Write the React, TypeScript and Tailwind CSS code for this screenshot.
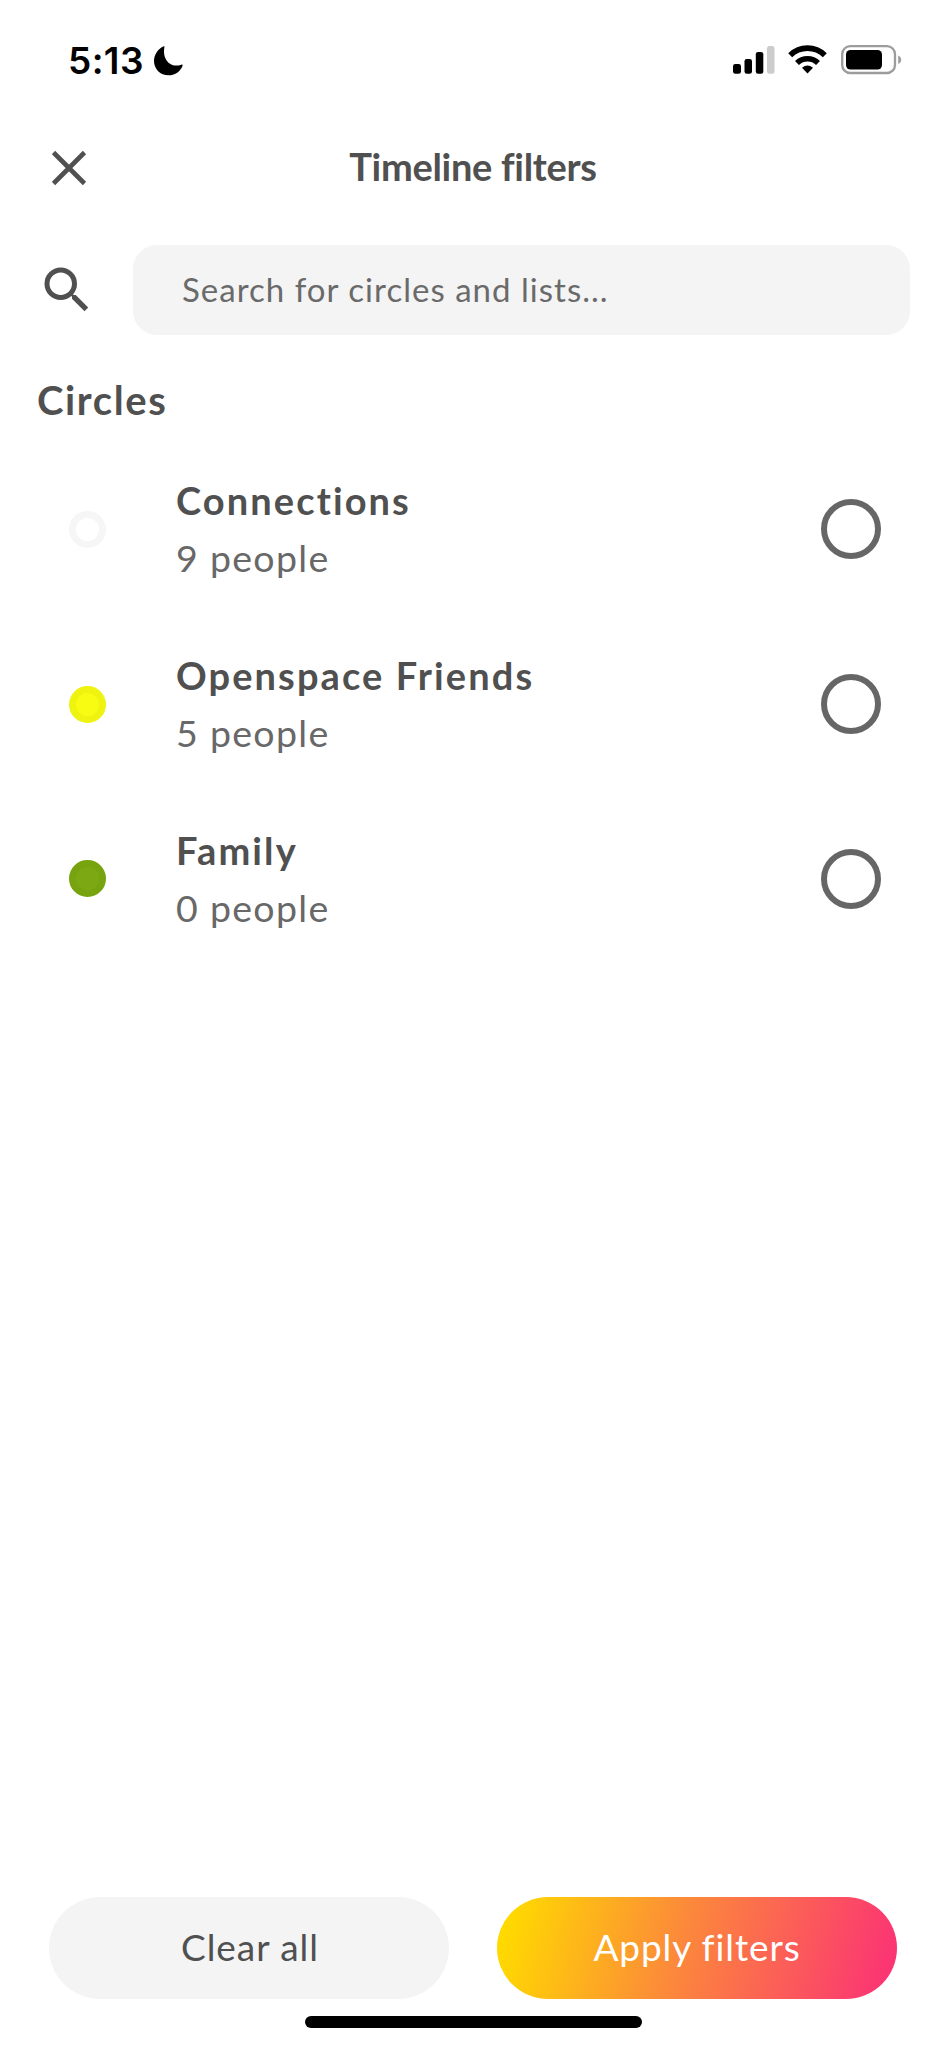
const circles = [
  { name: "Connections", people: "9 people", dot: "bg-white border-[#f6f6f6]" },
  { name: "Openspace Friends", people: "5 people", dot: "bg-[#f8fc12] border-[#eff310]" },
  { name: "Family", people: "0 people", dot: "bg-[#7ca814] border-[#77a30e]" },
];

function StatusBar() {
  return (
    <div className="flex h-[120px] items-start justify-between pl-[68px] pr-[43px] pt-[38px]">
      <div className="flex items-center">
        <span className="w-[86px] font-['Inter',sans-serif] text-[37px] leading-[45px] font-semibold tracking-[0.4px] text-black">5:13</span>
        <svg width="30" height="30" viewBox="0 0 30 30" className="block">
          <path d="M10.500.800C9 8 11 13.500 14.500 16.700C18.500 20 23 20.200 27.300 18.700C28.400 18.300 28.900 19 28.400 20.200C26 26 20.500 29.300 14.500 29.300C6.300 29.300 0 23 0 15C0 9 3.800 3 9.300.500C10.200.100 10.700.200 10.500.800Z" />
        </svg>
      </div>
      <svg width="170" height="30" viewBox="0 0 170 30" className="mt-[7px] block">
        <rect x="0" y="19" width="8" height="9.700" rx="2.300" />
        <rect x="11.500" y="14" width="7.500" height="14.700" rx="2.300" />
        <rect x="22.800" y="7" width="7.500" height="21.700" rx="2.300" />
        <rect x="34" y="1" width="7.500" height="27.700" rx="2.300" fill="#cccccc" />
        <g fill="none" stroke="#000" strokeWidth="5.600">
          <path d="M57.200 10.300a24.500 24.500 0 0 1 34.600 0" />
          <path d="M64 18a15 15 0 0 1 21 0" />
        </g>
        <path d="M69 22.800Q74.500 18 80 22.800L74.500 28.600Z" />
        <rect x="109.200" y="1.200" width="52.800" height="26.800" rx="8" fill="none" stroke="#9c9c9c" strokeWidth="2.300" />
        <rect x="113" y="5" width="36" height="19.500" rx="4.500" />
        <path d="M165.200 10.500c4 1.500 4 7 0 8.500z" fill="#9c9c9c" />
      </svg>
    </div>
  );
}

export default function App() {
  return (
    <main className="flex h-[2048px] w-[946px] flex-col bg-white font-['Lato','Open_Sans',sans-serif] text-[#505050]">
      <StatusBar />
      <header className="grid h-[96px] grid-cols-[140px_1fr_140px] items-center">
        <button aria-label="Close" className="ml-[51px] block w-[36px]">
          <svg width="36" height="36" viewBox="0 0 36 36" stroke="#505050" strokeWidth="4.600" className="block">
            <path d="M2.500 2.500L33.500 33.500M33.500 2.500L2.500 33.500" />
          </svg>
        </button>
        <h1 className="pb-[4px] text-center text-[38px] leading-[46px] font-bold tracking-[-0.3px] whitespace-nowrap">Timeline filters</h1>
      </header>
      <div className="mt-[29px] flex h-[90px] items-center pl-[37px] pr-[36px]">
        <svg width="60" height="60" viewBox="0 0 24 24" fill="#505050" className="block">
          <path d="M15.500 14h-.79l-.28-.27A6.471 6.471 0 0 0 16 9.500 6.500 6.500 0 1 0 9.500 16c1.610 0 3.090-.59 4.230-1.570l.27.28v.79l5 4.990L20.490 19l-4.990-5zm-6 0C7.010 14 5 11.990 5 9.500S7.010 5 9.500 5 14 7.010 14 9.500 11.990 14 9.500 14z" />
        </svg>
        <div className="ml-[36px] flex h-[90px] flex-1 items-center rounded-[24px] bg-[#f4f4f4] pl-[49px] pb-[2px]">
          <span className="text-[33px] leading-[40px] tracking-[1.02px] whitespace-nowrap text-[#6a6a6a]">Search for circles and lists...</span>
        </div>
      </div>
      <h2 className="mt-[41px] pl-[37px] text-[40px] leading-[48px] font-bold tracking-[1.6px]">Circles</h2>
      <ul className="mt-[18px] flex flex-col">
        {circles.map((c) => (
          <li key={c.name} className="flex h-[174.7px] items-center pl-[69px] pr-[65px]">
            <span className={`block size-[37px] shrink-0 rounded-full border-[7px] ${c.dot}`} />
            <div className="ml-[70px] flex flex-1 flex-col">
              <span className="text-[38px] leading-[58px] font-bold tracking-[2.1px]">{c.name}</span>
              <span className="text-[37.5px] leading-[58px] tracking-[1.3px] text-[#686868]">{c.people}</span>
            </div>
            <span className="block size-[60px] shrink-0 rounded-full border-[6px] border-[#666666]" />
          </li>
        ))}
      </ul>
      <footer className="mt-auto flex flex-col items-center pb-[20px]">
        <div className="flex w-full justify-between pl-[49px] pr-[49px]">
          <button className="h-[102px] w-[400px] rounded-full bg-[#f4f4f4] pb-[2px] pl-[2px] text-[37px] leading-[44px] tracking-[0.95px]">Clear all</button>
          <button className="h-[102px] w-[400px] rounded-full bg-[linear-gradient(105deg,#ffd900_4%,#fc8a3a_45%,#fb3573_96%)] pb-[2px] text-[37px] leading-[44px] tracking-[0.9px] text-white">Apply filters</button>
        </div>
        <div className="mt-[17px] h-[12px] w-[337px] rounded-full bg-black" />
      </footer>
    </main>
  );
}
